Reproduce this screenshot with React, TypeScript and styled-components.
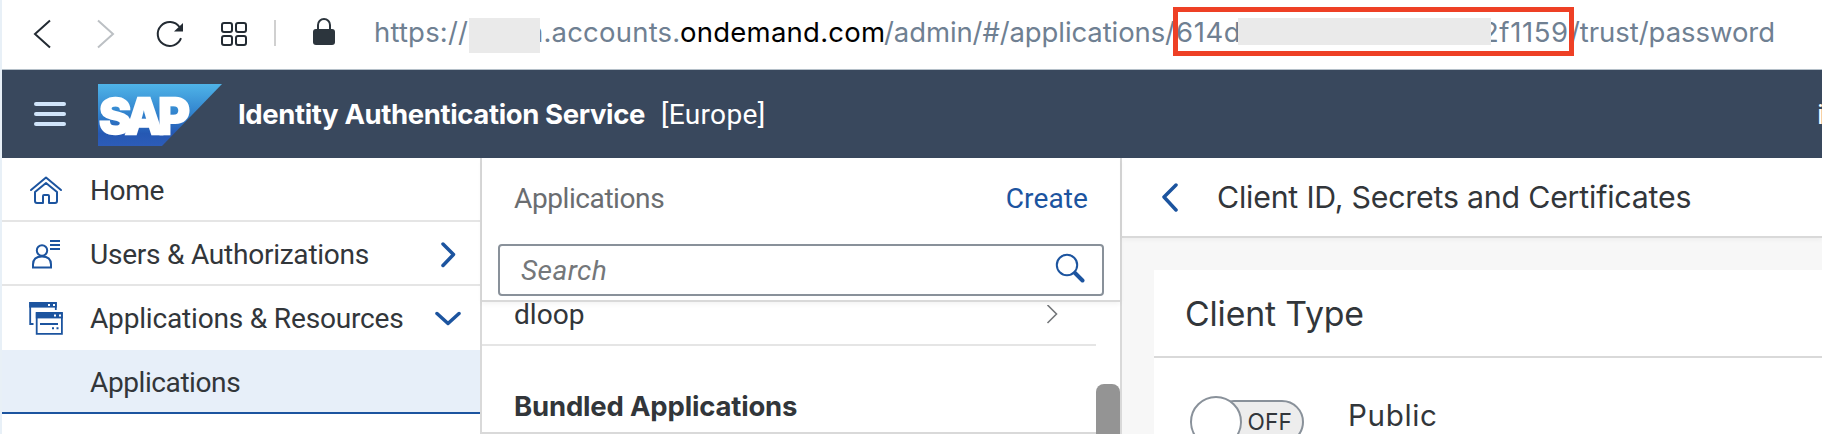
import React from "react";
import styled, { createGlobalStyle } from "styled-components";

const ui = `Roboto, "Open Sans", sans-serif`;
const inter = `Inter, sans-serif`;
const blue = "#1c549f";
const ink = "#32363a";
const line = "#d9d9d9";

const Global = createGlobalStyle`
  *, *::after { box-sizing: border-box; }
  body { margin: 0; background: #fff; overflow: hidden; }
`;

const Page = styled.div`
  width: 1822px;
  height: 434px;
  overflow: hidden;
  border-left: 2px solid #e8f0f7;
  display: flex;
  flex-direction: column;
  font-family: ${ui};
  color: ${ink};
`;

const Label = styled.span<{ $size?: number; $track?: number; $color?: string; $bold?: boolean; $italic?: boolean; $font?: string }>`
  font-family: ${(p) => p.$font ?? ui};
  font-size: ${(p) => p.$size ?? 28.1}px;
  letter-spacing: ${(p) => p.$track ?? 0}px;
  color: ${(p) => p.$color ?? "inherit"};
  font-weight: ${(p) => (p.$bold ? 700 : 400)};
  font-style: ${(p) => (p.$italic ? "italic" : "normal")};
  line-height: 34px;
  white-space: nowrap;
`;

/* Browser bar */
const BrowserBar = styled.div`
  flex: 0 0 70px;
  display: flex;
  border-bottom: 1px solid #b4bfc8;
`;

const BrowserIcons = styled.svg`
  flex: 0 0 372px;
  height: 69px;
`;

const Address = styled.div`
  display: flex;
  align-items: center;
  height: 64px;
  font-family: ${inter};
  font-size: 27.5px;
  color: #6f8092;
  white-space: nowrap;
`;

const UrlPart = styled.span<{ $w: number; $track?: number; $strong?: boolean }>`
  flex: 0 0 ${(p) => p.$w}px;
  min-width: 0;
  letter-spacing: ${(p) => p.$track ?? 0}px;
  color: ${(p) => (p.$strong ? "#000" : "inherit")};
`;

const Redaction = styled.span<{ $w: number; $h: number; $tuck: number }>`
  position: relative;
  z-index: 1;
  flex: 0 0 ${(p) => p.$w}px;
  height: ${(p) => p.$h}px;
  align-self: flex-start;
  margin-top: 18px;
  margin-right: -${(p) => p.$tuck}px;
  background: #eaeaea;
`;

const Highlighted = styled.span`
  position: relative;
  display: flex;
  align-items: center;
  flex: 0 0 394px;
  min-width: 0;
  height: 64px;
  &::after {
    content: "";
    position: absolute;
    z-index: 2;
    left: -3px;
    top: 7px;
    width: 401px;
    height: 49px;
    border: 5px solid #ee4025;
  }
`;

/* Application header */
const Shell = styled.header`
  flex: 0 0 88px;
  display: flex;
  align-items: center;
  background: #39485d;
  color: #fff;
`;

const Menu = styled.div`
  width: 32px;
  height: 24px;
  margin: 0 32px;
  display: flex;
  flex-direction: column;
  justify-content: space-between;
  & > i {
    height: 4px;
    border-radius: 2px;
    background: #d1e5fb;
  }
`;

const Logo = styled.svg`
  width: 124px;
  height: 62px;
  margin: 2px 16px 0 0;
`;

const ShellTitle = styled.div`
  display: flex;
  width: 423px;
`;

const Region = styled.div`
  display: flex;
  padding-top: 1px;
`;

const UserName = styled.div`
  display: flex;
  padding-top: 1px;
  margin-left: auto;
  width: 5px;
`;

/* Panels */
const Body = styled.div`
  flex: 0 0 276px;
  display: flex;
`;

const Sidebar = styled.nav`
  flex: 0 0 480px;
  border-right: 2px solid ${line};
`;

const NavItem = styled.div<{ $divider?: boolean; $selected?: boolean }>`
  height: 64px;
  padding: 3px 19px 0 26px;
  display: flex;
  align-items: center;
  border-bottom: 2px solid ${(p) => (p.$selected ? "#1c549f" : p.$divider ? "#e5e5e5" : "transparent")};
  background: ${(p) => (p.$selected ? "#e7eff9" : "#fff")};
`;

const NavIcon = styled.div`
  width: 36px;
  height: 36px;
  margin-right: 26px;
  svg { display: block; }
`;

const Arrow = styled.svg`
  width: 26px;
  height: 26px;
  margin-left: auto;
`;

const ListPanel = styled.section`
  flex: 0 0 640px;
  border-right: 2px solid ${line};
  display: flex;
  flex-direction: column;
`;

const ListHead = styled.div`
  position: relative;
  height: 144px;
  border-bottom: 2px solid ${line};
  box-shadow: 0 2px 5px rgba(0, 0, 0, 0.05);
`;

const ListTitle = styled.div`
  height: 86px;
  padding: 0 32px 4px;
  display: flex;
  justify-content: space-between;
  align-items: center;
`;

const SearchBox = styled.div`
  height: 52px;
  margin: 0 16px;
  padding: 2px 17px 0 21px;
  border: 2px solid #89919a;
  border-radius: 4px;
  display: flex;
  justify-content: space-between;
  align-items: center;
  svg { margin-top: -6px; }
`;

const ListArea = styled.div`
  display: flex;
  height: 132px;
`;

const ListItems = styled.div`
  flex: 1;
`;

const ListItem = styled.div`
  height: 44px;
  padding: 0 38px 16px 32px;
  display: flex;
  align-items: center;
  justify-content: space-between;
  border-bottom: 2px solid #e5e5e5;
`;

const GroupTitle = styled.div`
  height: 88px;
  padding: 33px 32px 0;
  display: flex;
  align-items: center;
  border-bottom: 2px solid ${line};
`;

const Scrollbar = styled.div`
  width: 24px;
  padding-top: 82px;
  &::after {
    content: "";
    display: block;
    height: 80px;
    border-radius: 8px;
    background: #949494;
  }
`;

const Detail = styled.main`
  flex: 1;
  min-width: 0;
  background: #f7f7f7;
`;

const DetailHead = styled.div`
  height: 80px;
  padding-left: 38px;
  display: flex;
  align-items: center;
  background: #fff;
  border-bottom: 2px solid ${line};
  box-shadow: 0 2px 5px rgba(0, 0, 0, 0.04);
  svg { margin-right: 37px; }
`;

const Card = styled.div`
  margin: 32px 0 0 32px;
  background: #fff;
`;

const CardTitle = styled.div`
  height: 88px;
  padding: 1px 0 0 31px;
  display: flex;
  align-items: center;
  border-bottom: 2px solid ${line};
`;

const Field = styled.div`
  height: 130px;
  padding: 38px 0 0 36px;
  display: flex;
  align-items: flex-start;
`;

const Switch = styled.div`
  display: flex;
  align-items: center;
  width: 114px;
  height: 52px;
  margin-right: 44px;
`;

const Knob = styled.div`
  position: relative;
  z-index: 1;
  flex: 0 0 52px;
  height: 52px;
  border: 2px solid #89919a;
  border-radius: 50%;
  background: #fff;
`;

const Track = styled.div`
  flex: 1;
  height: 44px;
  margin-left: -30px;
  padding-right: 10px;
  display: flex;
  align-items: center;
  justify-content: flex-end;
  border: 2px solid #89919a;
  border-radius: 22px;
  background: #ededed;
`;

const FieldName = styled.div`
  display: flex;
  padding-top: 2px;
`;

const HomeIcon = () => (
  <svg width="36" height="36" fill="none" stroke={blue} strokeWidth="2" strokeLinejoin="round" strokeLinecap="round">
    <path d="M3 17 18 4.500 33 17" />
    <path d="M7 19v9q0 2 2 2h6v-7q0-1 1-1h4q1 0 1 1v7h6q2 0 2-2v-9L18 10 7 19" />
  </svg>
);

const UserIcon = () => (
  <svg width="36" height="36" fill="none" stroke={blue} strokeWidth="2">
    <circle cx="14" cy="13.500" r="5.2" />
    <path d="M5 30.500v-3q0-8 9-8t9 8v3zM22 4h10M22 8h10M22 12h10" />
  </svg>
);

const WindowsIcon = () => (
  <svg width="36" height="36" fill="none" stroke={blue} strokeWidth="1.8">
    <path d="M5.500 23H2.200V2h25.600v7" />
    <path d="M1.200 1h27.600v5.600H1.200z" fill={blue} stroke="none" />
    <path d="M8.700 12h25.200v20.800H8.700z" />
    <path d="M7.800 11.400h27v6h-27z" fill={blue} stroke="none" />
    <path d="M12 23h18" strokeWidth="2" />
    <path d="M20 4h2M25 4h2M26 14.500h2M31 14.500h2" stroke="#fff" strokeWidth="2" />
    <path d="M24 27.300h2M28.500 27.300h2" strokeWidth="2" />
  </svg>
);

export default function App() {
  return (
    <Page>
      <Global />
      <BrowserBar>
        <BrowserIcons viewBox="2 0 372 69" fill="none" stroke="#232b33" strokeWidth="2">
          <path d="M50 20.500 35 34l15 13.500" />
          <path d="M98 20.500 113 34 98 47.500" stroke="#bcc0c4" />
          <path d="M181 38.200A12 12 0 1 1 179.500 27" />
          <path d="M183 23v8.500h-9z" fill="#232b33" stroke="none" />
          <rect x="222" y="23" width="10" height="9" rx="2" />
          <rect x="236" y="23" width="10" height="9" rx="2" />
          <rect x="222" y="36" width="10" height="9" rx="2" />
          <rect x="236" y="36" width="10" height="9" rx="2" />
          <path d="M275 20v26" stroke="#d0d0d0" />
          <path d="M318 30v-5a6 6 0 0 1 12 0v5" stroke="#2c353d" />
          <rect x="313" y="29" width="22" height="16" rx="3" fill="#2c353d" stroke="none" />
        </BrowserIcons>
        <Address>
          <UrlPart $w={95} $track={0.18}>https://</UrlPart>
          <Redaction $w={71} $h={35} $tuck={13} />
          <UrlPart $w={153} $track={0.2}>n.accounts.</UrlPart>
          <UrlPart $w={204} $track={0.24} $strong>ondemand.com</UrlPart>
          <UrlPart $w={292} $track={-0.1}>/admin/#/applications/</UrlPart>
          <Highlighted>
            <UrlPart $w={62} $track={0.6}>614d</UrlPart>
            <Redaction $w={253} $h={27} $tuck={9} />
            <UrlPart $w={88} $track={0.6}>2f1159</UrlPart>
          </Highlighted>
          <UrlPart $w={205} $track={-0.05}>/trust/password</UrlPart>
        </Address>
      </BrowserBar>

      <Shell>
        <Menu><i /><i /><i /></Menu>
        <Logo viewBox="0 0 124 62">
          <defs>
            <linearGradient id="sap" x1="0" y1="0" x2="0" y2="1">
              <stop offset="0" stopColor="#4fb4e8" />
              <stop offset="0.5" stopColor="#3080cc" />
              <stop offset="0.8" stopColor="#2558b3" />
              <stop offset="1" stopColor="#2d5cb8" />
            </linearGradient>
          </defs>
          <path d="M0 0h124L64 62H0z" fill="url(#sap)" />
          <text x="1" y="49.500" fontFamily="Inter, sans-serif" fontWeight="800" fontSize="50" fill="#fff" stroke="#fff" strokeWidth="2.500" letterSpacing="-5" textLength="86" lengthAdjust="spacingAndGlyphs">SAP</text>
        </Logo>
        <ShellTitle><Label $bold $font={inter} $size={27.5} $track={-0.38}>Identity Authentication Service</Label></ShellTitle>
        <Region><Label $track={0.3}>[Europe]</Label></Region>
        <UserName><Label>i</Label></UserName>
      </Shell>

      <Body>
        <Sidebar>
          <NavItem $divider>
            <NavIcon><HomeIcon /></NavIcon>
            <Label $track={-0.44}>Home</Label>
          </NavItem>
          <NavItem $divider>
            <NavIcon><UserIcon /></NavIcon>
            <Label $track={-0.27}>Users &amp; Authorizations</Label>
            <Arrow fill="none" stroke={blue} strokeWidth="3.500" strokeLinecap="round" strokeLinejoin="round">
              <path d="M8 2 18.500 12.500 8 23.500" />
            </Arrow>
          </NavItem>
          <NavItem>
            <NavIcon><WindowsIcon /></NavIcon>
            <Label $track={-0.21}>Applications &amp; Resources</Label>
            <Arrow fill="none" stroke={blue} strokeWidth="3.500" strokeLinecap="round" strokeLinejoin="round">
              <path d="M2 7.500 13 17.500 24 7.500" />
            </Arrow>
          </NavItem>
          <NavItem $selected>
            <NavIcon />
            <Label $track={-0.45}>Applications</Label>
          </NavItem>
        </Sidebar>

        <ListPanel>
          <ListHead>
            <ListTitle>
              <Label $track={-0.45} $color="#6a6d70">Applications</Label>
              <Label $track={0.07} $color={blue}>Create</Label>
            </ListTitle>
            <SearchBox>
              <Label $italic $track={0.39} $color="#74777a">Search</Label>
              <svg width="30" height="30" fill="none" stroke={blue} strokeWidth="2">
                <circle cx="12" cy="12" r="10.200" />
                <path d="m20 20 7.500 7.500" strokeWidth="4" strokeLinecap="round" />
              </svg>
            </SearchBox>
          </ListHead>
          <ListArea>
            <ListItems>
              <ListItem>
                <Label>dloop</Label>
                <svg width="12" height="20" fill="none" stroke="#74777a" strokeWidth="1.600">
                  <path d="m1.500 0 9 9-9 9" />
                </svg>
              </ListItem>
              <GroupTitle>
                <Label $bold $font={inter} $size={27.5} $track={-0.18}>Bundled Applications</Label>
              </GroupTitle>
            </ListItems>
            <Scrollbar />
          </ListArea>
        </ListPanel>

        <Detail>
          <DetailHead>
            <svg width="20" height="30" fill="none" stroke={blue} strokeWidth="3.500" strokeLinecap="round" strokeLinejoin="round">
              <path d="M16 3 4 15l12 13" />
            </svg>
            <Label $font={inter} $size={30.3} $track={-0.2}>Client ID, Secrets and Certificates</Label>
          </DetailHead>
          <Card>
            <CardTitle>
              <Label $font={inter} $size={33.8} $track={-0.14}>Client Type</Label>
            </CardTitle>
            <Field>
              <Switch>
                <Knob />
                <Track><Label $font={inter} $size={22.7} $track={0.13}>OFF</Label></Track>
              </Switch>
              <FieldName><Label $font={inter} $size={29.6} $track={0.64}>Public</Label></FieldName>
            </Field>
          </Card>
        </Detail>
      </Body>
    </Page>
  );
}
